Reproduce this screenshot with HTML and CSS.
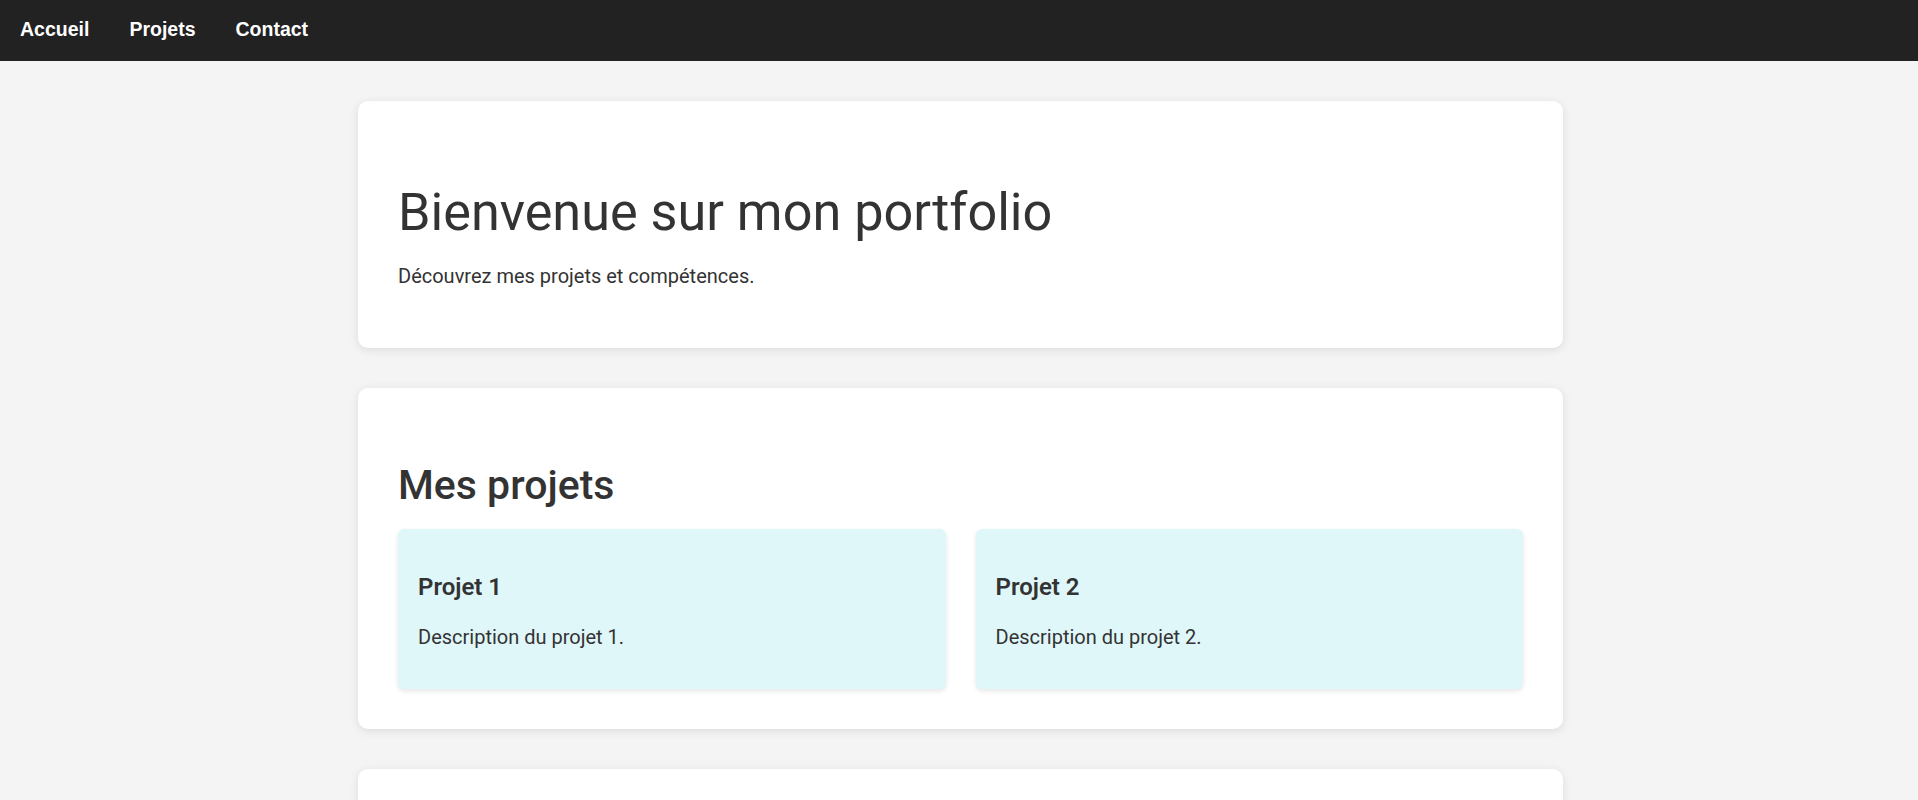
FILE: index.html
```html
<!DOCTYPE html>
<html lang="fr">
<head>
<meta charset="utf-8">
<title>Mon portfolio</title>
<link rel="stylesheet" href="styles.css">
</head>
<body>
<nav class="topbar">
  <a href="#accueil" class="nav-link">Accueil</a>
  <a href="#projets" class="nav-link">Projets</a>
  <a href="#contact" class="nav-link">Contact</a>
</nav>
<div class="page">
  <main class="container">
    <section class="card" id="accueil">
      <h1 class="hero-title">Bienvenue sur mon portfolio</h1>
      <p class="text">Découvrez mes projets et compétences.</p>
    </section>
    <section class="card" id="projets">
      <h2 class="section-title">Mes projets</h2>
      <div class="projects">
        <article class="project">
          <h3 class="project-title">Projet 1</h3>
          <p class="text">Description du projet 1.</p>
        </article>
        <article class="project">
          <h3 class="project-title">Projet 2</h3>
          <p class="text">Description du projet 2.</p>
        </article>
      </div>
    </section>
    <section class="card" id="contact">
      <h2 class="section-title">Contact</h2>
      <form class="contact-form">
        <input class="field" type="text" placeholder="Nom">
        <input class="field" type="email" placeholder="Email">
        <textarea class="field area" placeholder="Message"></textarea>
        <button class="btn" type="button">Envoyer</button>
      </form>
    </section>
  </main>
</div>
</body>
</html>
```
FILE: styles.css
```css
html, body {
  margin: 0;
  padding: 0;
}

body {
  background: #f4f4f4;
  color: #333;
  font-family: Roboto, "Liberation Sans", Arial, sans-serif;
  font-size: 20px;
}

.topbar {
  background: #222;
  display: flex;
  gap: 40px;
  padding: 18px 20px 20px;
}

.nav-link {
  color: #fff;
  text-decoration: none;
  font-family: "Liberation Sans", Arial, sans-serif;
  font-weight: 700;
  font-size: 19.5px;
  line-height: 23px;
}

.page {
  padding-left: 3px;
}

.container {
  max-width: 1205px;
  margin: 40px auto;
  display: flex;
  flex-direction: column;
  gap: 40px;
}

.card {
  background: #fff;
  border-radius: 10px;
  padding: 40px;
  box-shadow: 0 2px 10px rgba(0, 0, 0, 0.1);
}

.hero-title {
  font-size: 52.2px;
  font-weight: 400;
  margin: 41px 0 20px;
  line-height: 62px;
}

.text {
  margin: 20px 0;
  font-size: 20px;
}

.section-title {
  font-size: 41px;
  font-weight: 500;
  line-height: 47px;
  margin: 34px 0 20px;
}

.projects {
  display: grid;
  grid-template-columns: 1fr 1fr;
  gap: 30px;
}

.project {
  background: #e0f7fa;
  border-radius: 6px;
  padding: 20px;
  box-shadow: 0 2px 5px rgba(0, 0, 0, 0.1);
}

.project-title {
  font-size: 24px;
  font-weight: 600;
  margin: 24px 0;
}

.contact-form {
  display: flex;
  flex-direction: column;
  gap: 16px;
  margin-bottom: 20px;
}

.field {
  font: inherit;
  font-size: 18px;
  padding: 10px 12px;
  border: 1px solid #ccc;
  border-radius: 6px;
}

.area {
  height: 70px;
  resize: none;
}

.btn {
  align-self: flex-start;
  font: inherit;
  font-size: 18px;
  color: #fff;
  background: #222;
  border: none;
  border-radius: 6px;
  padding: 10px 24px;
}
```
